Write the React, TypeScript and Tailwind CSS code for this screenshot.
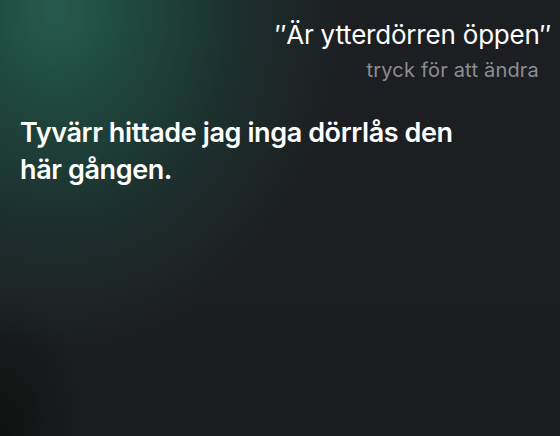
import React from "react";

export default function App() {
    return (
        <div
            className="relative h-[436px] w-[560px] overflow-hidden bg-[#1b1d20] font-['Inter','Noto_Sans',sans-serif] bg-[radial-gradient(ellipse_290px_340px_at_55px_10px,#265b4c_0%,#1f463c_30%,#1c302e_62%,rgba(27,29,32,0)_100%),radial-gradient(ellipse_90px_150px_at_0px_436px,rgba(13,15,13,0.85)_0%,rgba(13,15,13,0)_100%),linear-gradient(180deg,#1c1f22_0%,#1c1d20_100%)]"
        >
            <div className="flex flex-col items-end pr-[9px] pt-[18px]">
                <div className="text-[26px] leading-[34px] tracking-[-0.2px] text-white">
                    ″Är ytterdörren öppen″
                </div>
                <div className="mr-[12px] mt-[4px] text-[20px] leading-[28px] tracking-[0.2px] text-[#8c8d92]">
                    tryck för att ändra
                </div>
            </div>
            <div className="pl-[20px] pt-[30px]">
                <p className="w-[460px] text-[27px] font-semibold leading-[37px] tracking-[-0.4px] text-white">
                    Tyvärr hittade jag inga dörrlås den här gången.
                </p>
            </div>
        </div>
    );
}
